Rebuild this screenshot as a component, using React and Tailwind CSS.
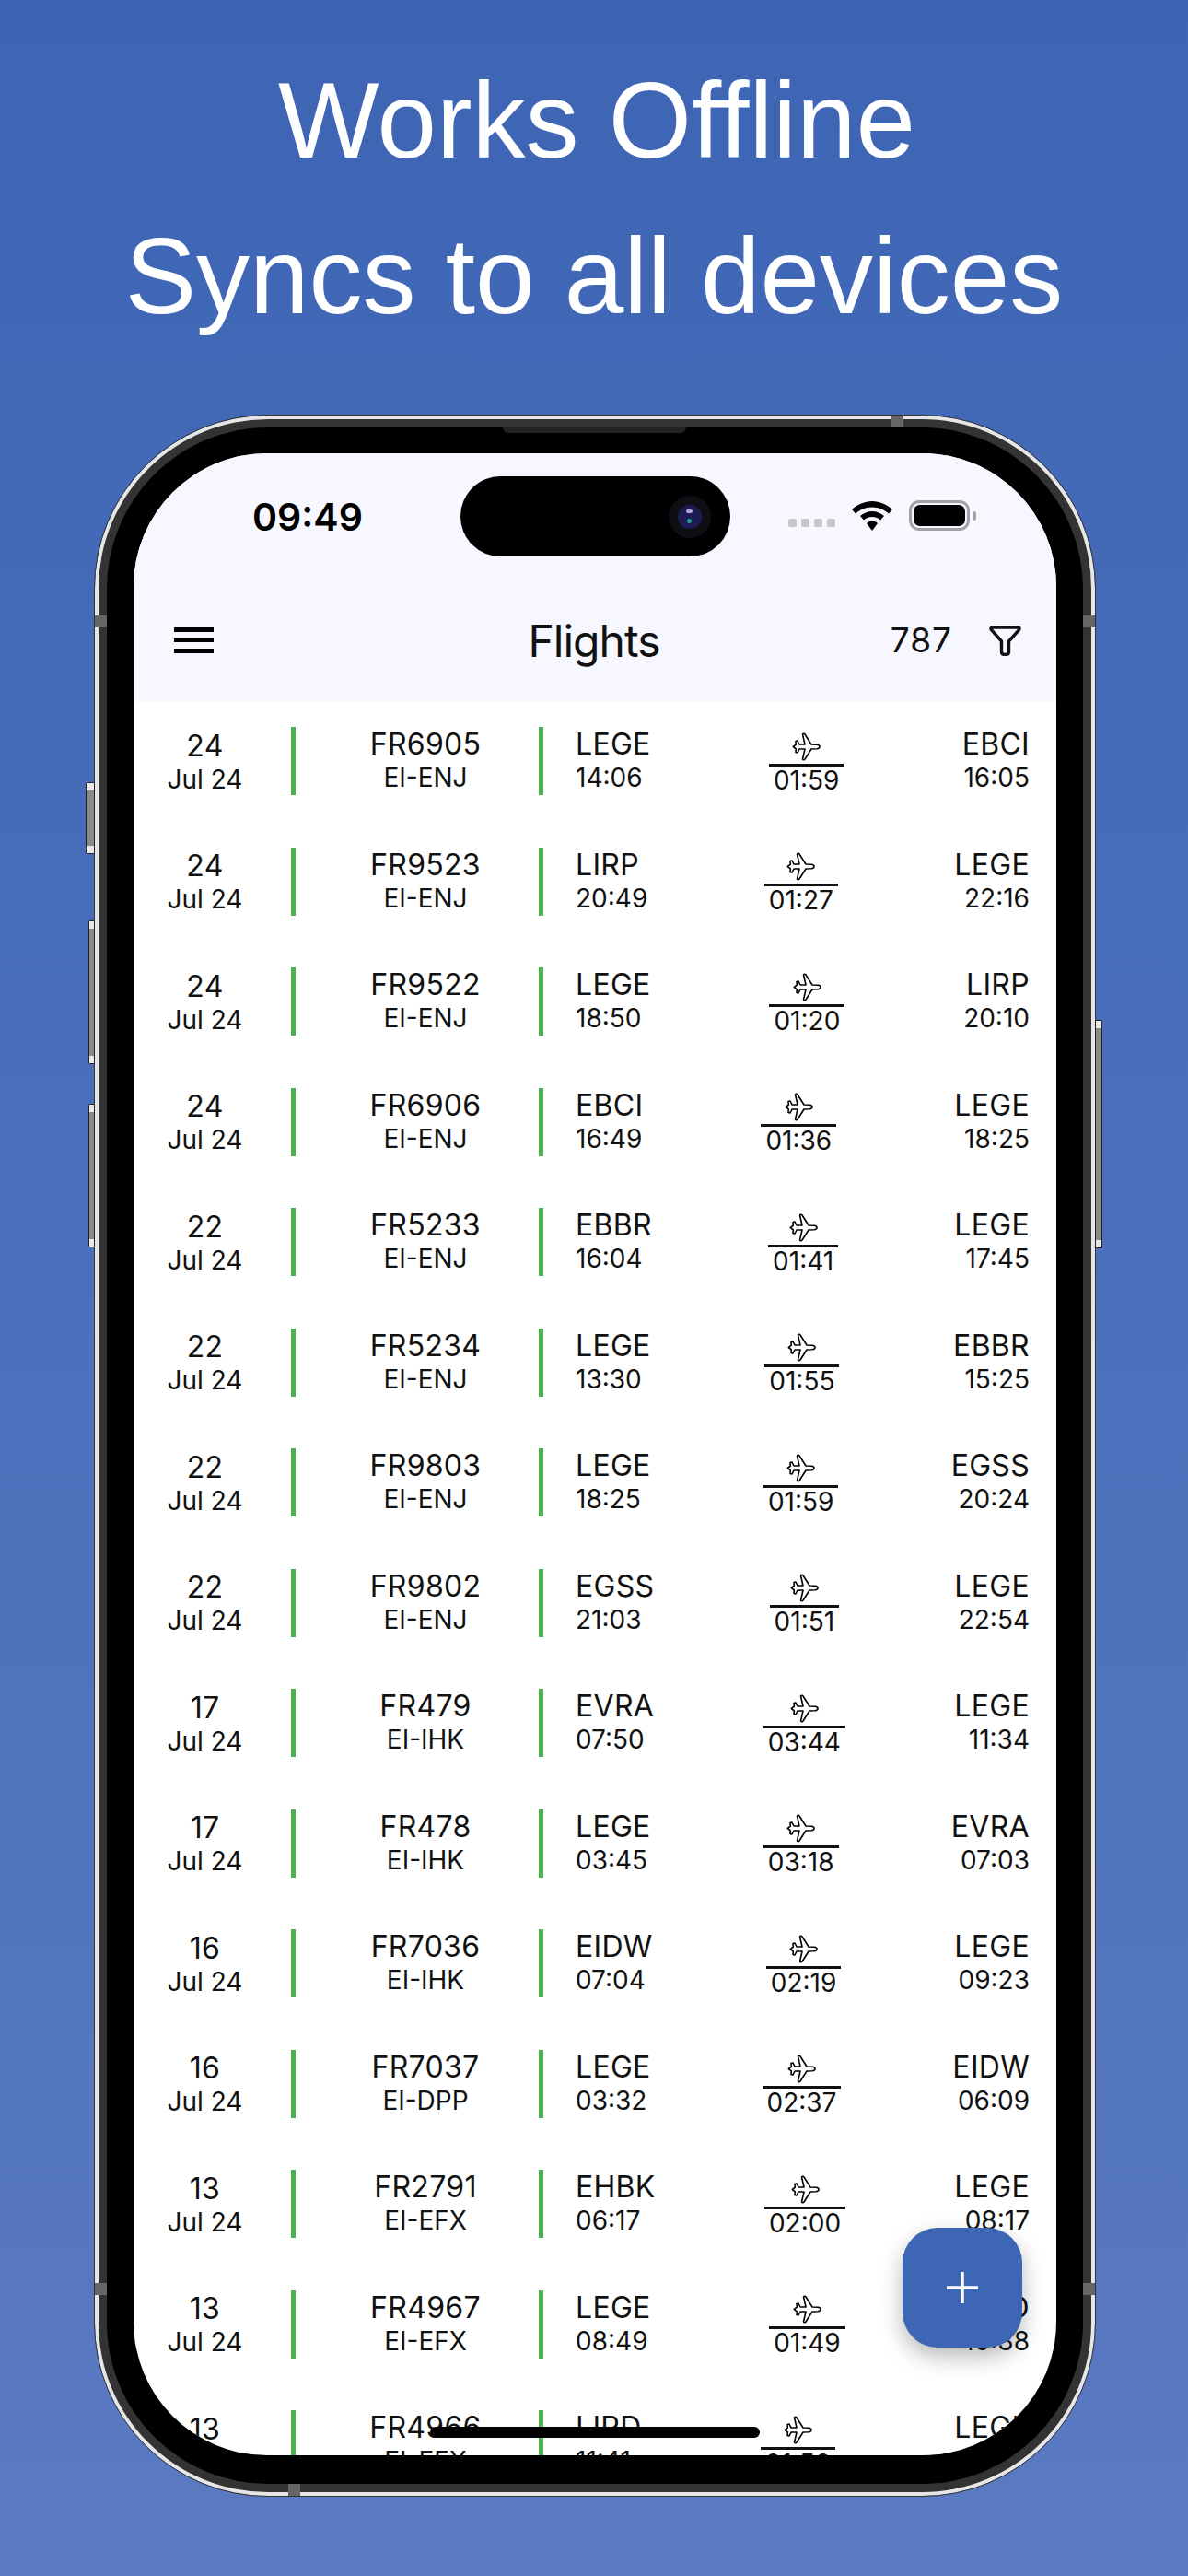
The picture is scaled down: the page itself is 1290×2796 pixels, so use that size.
const FLIGHTS = [
  ["24", "FR6905", "EI-ENJ", "LEGE", "14:06", "01:59", "EBCI", "16:05"],
  ["24", "FR9523", "EI-ENJ", "LIRP", "20:49", "01:27", "LEGE", "22:16"],
  ["24", "FR9522", "EI-ENJ", "LEGE", "18:50", "01:20", "LIRP", "20:10"],
  ["24", "FR6906", "EI-ENJ", "EBCI", "16:49", "01:36", "LEGE", "18:25"],
  ["22", "FR5233", "EI-ENJ", "EBBR", "16:04", "01:41", "LEGE", "17:45"],
  ["22", "FR5234", "EI-ENJ", "LEGE", "13:30", "01:55", "EBBR", "15:25"],
  ["22", "FR9803", "EI-ENJ", "LEGE", "18:25", "01:59", "EGSS", "20:24"],
  ["22", "FR9802", "EI-ENJ", "EGSS", "21:03", "01:51", "LEGE", "22:54"],
  ["17", "FR479", "EI-IHK", "EVRA", "07:50", "03:44", "LEGE", "11:34"],
  ["17", "FR478", "EI-IHK", "LEGE", "03:45", "03:18", "EVRA", "07:03"],
  ["16", "FR7036", "EI-IHK", "EIDW", "07:04", "02:19", "LEGE", "09:23"],
  ["16", "FR7037", "EI-DPP", "LEGE", "03:32", "02:37", "EIDW", "06:09"],
  ["13", "FR2791", "EI-EFX", "EHBK", "06:17", "02:00", "LEGE", "08:17"],
  ["13", "FR4967", "EI-EFX", "LEGE", "08:49", "01:49", "LIRD", "10:38"],
  ["13", "FR4966", "EI-EFX", "LIRD", "11:41", "01:50", "LEGE", "13:31"],
];

function Plane() {
  return (
    <svg width="31" height="31" viewBox="0 0 31 31" fill="none" stroke="#000" strokeWidth="1.6" strokeLinejoin="round">
      <path d="M11.500 2 C12 1 13.500 1 14 2 L21 13 L27 13.300 C29 13.500 30 14.700 30 15.500 C30 16.300 29 17.500 27 17.700 L21 18 L14 29 C13.500 30 12 30 11.500 29 L14 18 L8 18 L6 22 L4 21.500 L4.300 17.800 L1.300 15.500 L4.300 13.200 L4 9.500 L6 9 L8 13 L14 13 Z" />
    </svg>
  );
}

function FlightRow({ day, flight, reg, from, dep, duration, to, arr }) {
  return (
    <div className="flex h-[130.5px] flex-none items-center text-[#111]">
      <div className="w-[155px] flex-none pt-[1px] text-center">
        <div className="text-[32px] leading-[38px] tracking-[0.3px]">{day}</div>
        <div className="text-[28px] leading-[34px]">Jul 24</div>
      </div>
      <div className="ml-[16px] h-[74px] w-[5px] flex-none bg-[#4caf50]" />
      <div className="w-[264px] flex-none pb-[2px] pl-[18px] text-center">
        <div className="text-[32px] leading-[38px] tracking-[0.3px]">{flight}</div>
        <div className="text-[28px] leading-[34px]">{reg}</div>
      </div>
      <div className="h-[74px] w-[5px] flex-none bg-[#4caf50]" />
      <div className="flex flex-1 items-center justify-between pl-[35px] pr-[29px]">
        <div className="pb-[2px] text-left">
          <div className="text-[32px] leading-[38px] tracking-[0.3px]">{from}</div>
          <div className="text-[28px] leading-[34px]">{dep}</div>
        </div>
        <div className="flex flex-col items-center pt-[4px]">
          <Plane />
          <div className="mt-[3px] border-t-[3px] border-[#111] px-[5px] text-[28px] leading-[30px]">{duration}</div>
        </div>
        <div className="pb-[2px] text-right">
          <div className="text-[32px] leading-[38px] tracking-[0.3px]">{to}</div>
          <div className="text-[28px] leading-[34px]">{arr}</div>
        </div>
      </div>
    </div>
  );
}

function StatusIcons() {
  return (
    <div className="flex items-center">
      <div className="mt-[16px] flex gap-[5px]">
        <span className="h-[9px] w-[9px] rounded-[2px] bg-[#c6c6cc]" />
        <span className="h-[9px] w-[9px] rounded-[2px] bg-[#c6c6cc]" />
        <span className="h-[9px] w-[9px] rounded-[2px] bg-[#c6c6cc]" />
        <span className="h-[9px] w-[9px] rounded-[2px] bg-[#c6c6cc]" />
      </div>
      <svg className="ml-[18px]" width="44" height="32" viewBox="0 0 44 32" fill="#000">
        <path d="M22 0 C30 0 38 3.500 44 9 L40 13.500 C35.500 9.300 29 6.500 22 6.500 C15 6.500 8.500 9.300 4 13.500 L0 9 C6 3.500 14 0 22 0 Z" />
        <path d="M22 11 C27 11 31.500 13 35 16 L31 20.500 C29 18.500 25.500 17 22 17 C18.500 17 15 18.500 13 20.500 L9 16 C12.500 13 17 11 22 11 Z" />
        <path d="M22 21.500 C24.500 21.500 26.500 22.500 28 24 L22 32 L16 24 C17.500 22.500 19.500 21.500 22 21.500 Z" />
      </svg>
      <div className="ml-[18px] flex h-[33px] w-[66px] items-center justify-center rounded-[11px] border-[3px] border-[#a2a2a6]">
        <div className="h-[23px] w-[56px] rounded-[7px] bg-black" />
      </div>
      <div className="ml-[3px] h-[10px] w-[4px] rounded-r-[3px] bg-[#a2a2a6]" />
    </div>
  );
}

function Screen() {
  return (
    <div className="relative flex h-[2173px] w-[1002px] flex-col overflow-hidden rounded-[145px] bg-white font-['Inter',sans-serif]">
      <div className="h-[269px] flex-none bg-[#f6f7ff]">
        <div className="flex h-[158px] items-start justify-between pl-[129px] pr-[87px] pt-[46px]">
          <div className="text-[41px] font-semibold leading-[46px] text-black">09:49</div>
          <div className="mt-[5px]">
            <StatusIcons />
          </div>
        </div>
        <div className="flex h-[90px] items-center justify-between pl-[44px] pr-[38px]">
          <div className="flex w-[300px] flex-col gap-[7px]">
            <span className="h-[4.5px] w-[43px] bg-black" />
            <span className="h-[4.5px] w-[43px] bg-black" />
            <span className="h-[4.5px] w-[43px] bg-black" />
          </div>
          <div className="mr-[8px] mt-[2px] text-[48px] leading-[56px] tracking-[-1px] text-[#111]">Flights</div>
          <div className="flex w-[300px] items-center justify-end gap-[40px]">
            <span className="text-[37px] leading-[42px] tracking-[1px] text-[#111]">787</span>
            <svg width="35" height="33" viewBox="0 0 35 33" fill="none" stroke="#111" strokeWidth="3.4" strokeLinejoin="round">
              <path d="M3.500 2 L31.500 2 C33 2 33.500 3.500 32.500 4.700 L21.500 17 L21.500 28.500 C21.500 30.500 20 31.500 17.500 31.500 C15 31.500 13.500 30.500 13.500 28.500 L13.500 17 L2.500 4.700 C1.500 3.500 2 2 3.500 2 Z" />
            </svg>
          </div>
        </div>
      </div>
      {FLIGHTS.map((f) => (
        <FlightRow key={f[1]} day={f[0]} flight={f[1]} reg={f[2]} from={f[3]} dep={f[4]} duration={f[5]} to={f[6]} arr={f[7]} />
      ))}

      {/* Dynamic island */}
      <div className="absolute left-[355px] top-[25px] flex h-[87px] w-[293px] items-center justify-end rounded-[44px] bg-black pr-[21px]">
        <div className="flex h-[46px] w-[46px] items-center justify-center rounded-full bg-[#0e0e14]">
          <div className="relative h-[26px] w-[26px] rounded-full bg-[#1c1c52]">
            <span className="absolute left-[9px] top-[5px] h-[4px] w-[7px] rounded-full bg-[#b9a6d8]" />
            <span className="absolute left-[10px] top-[15px] h-[5px] w-[5px] rounded-full bg-[#1fa58f]" />
          </div>
        </div>
      </div>

      {/* Add button */}
      <div className="absolute left-[835px] top-[1926px] flex h-[130px] w-[130px] items-center justify-center rounded-[38px] bg-[#3d66b5] shadow-[0_10px_24px_rgba(0,0,0,0.28)]">
        <svg width="34" height="34" viewBox="0 0 34 34" stroke="#fff" strokeWidth="3.5">
          <path d="M17 0 V34 M0 17 H34" />
        </svg>
      </div>

      {/* Home indicator */}
      <div className="absolute left-[322px] top-[2142px] h-[12px] w-[358px] rounded-full bg-black" />
    </div>
  );
}

function SideButton({ className }) {
  return (
    <div className={`absolute flex flex-col justify-between rounded-[2px] border border-[#222] bg-[#8b8a86] ${className}`}>
      <span className="h-[8px] bg-[#e8e8e8]" />
      <span className="h-[8px] bg-[#e8e8e8]" />
    </div>
  );
}

function Phone() {
  return (
    <div className="relative h-[2258px] w-[1086px] rounded-[188px] bg-[#e6e6e6] p-[4px] outline outline-1 outline-[#333]">
      <SideButton className="left-[-10px] top-[398px] h-[78px] w-[10px]" />
      <SideButton className="left-[-7px] top-[548px] h-[156px] w-[7px]" />
      <SideButton className="left-[-7px] top-[747px] h-[156px] w-[7px]" />
      <SideButton className="right-[-8px] top-[656px] h-[248px] w-[8px]" />

      {/* Antenna bands */}
      <span className="absolute left-[865px] top-0 h-[13px] w-[13px] bg-[#666]" />
      <span className="absolute left-0 top-[217px] h-[13px] w-[13px] bg-[#666]" />
      <span className="absolute right-0 top-[217px] h-[13px] w-[13px] bg-[#666]" />
      <span className="absolute left-0 top-[2027px] h-[13px] w-[13px] bg-[#666]" />
      <span className="absolute right-0 top-[2027px] h-[13px] w-[13px] bg-[#666]" />
      <span className="absolute bottom-0 left-[210px] h-[13px] w-[13px] bg-[#666]" />

      <div className="h-full w-full rounded-[184px] bg-[#333] p-[9px]">
        <div className="relative flex h-full w-full items-start justify-center rounded-[175px] bg-black pt-[28px]">
          <div className="absolute left-[430px] top-0 h-[6px] w-[199px] rounded-b-[6px] bg-[#222]" />
          <Screen />
        </div>
      </div>
    </div>
  );
}

export default function App() {
  return (
    <div className="flex h-[2796px] w-[1290px] flex-col items-center overflow-hidden bg-gradient-to-b from-[#3d65b4] to-[#5a7ac2] font-['Liberation_Sans',sans-serif]">
      <div className="mt-[47px] text-center text-[116px] leading-[169px] text-white">
        <div className="pl-[6px]">Works Offline</div>
        <div>Syncs to all devices</div>
      </div>
      <div className="ml-[2px] mt-[66px]">
        <Phone />
      </div>
    </div>
  );
}
